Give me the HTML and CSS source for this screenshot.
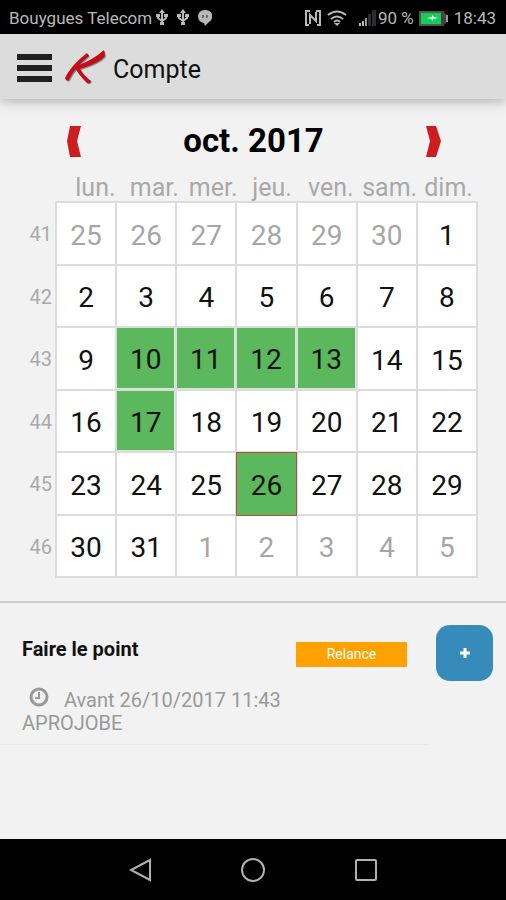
FILE: index.html
```html
<!DOCTYPE html>
<html lang="fr">
<head>
<meta charset="utf-8">
<meta name="viewport" content="width=device-width, initial-scale=1">
<title>Compte</title>
<link rel="stylesheet" href="styles.css">
</head>
<body>
<div class="status">
  <span>Bouygues Telecom</span>
  <svg class="usb" width="12" height="18" viewBox="0 0 12 18" fill="none" stroke="currentColor" stroke-width="2"><path d="M6 3v11M2 6v3l4 3 4-3V6"/><path d="M3 4l3-4 3 4zM4 13h4v3H4zM0 5h4v3H0zM8 5h4v3H8z" fill="currentColor" stroke="none"/></svg>
  <svg class="usb" width="12" height="18" viewBox="0 0 12 18" fill="none" stroke="currentColor" stroke-width="2"><path d="M6 3v11M2 6v3l4 3 4-3V6"/><path d="M3 4l3-4 3 4zM4 13h4v3H4zM0 5h4v3H0zM8 5h4v3H8z" fill="currentColor" stroke="none"/></svg>
  <svg class="chat" width="14" height="16" viewBox="0 0 14 16"><path d="M7 0c9 0 9 9 4 12l-4 4-1-3C-2 12-2 0 7 0z" fill="currentColor"/><path d="M4 5h2v2L5 8H4zM8 5h2v2L9 8H8z" fill="#666"/></svg>
  <span class="grow"></span>
  <svg width="16" height="16" viewBox="0 0 16 16" fill="none" stroke="currentColor" stroke-width="2"><path d="M5 1H1v14h3M11 1h4v14h-3"/><path d="M5 14V5l6 6V2"/></svg>
  <svg class="wifi" width="20" height="17" viewBox="0 0 20 17" fill="none" stroke="currentColor" stroke-width="2"><path d="M1 5q9-7 18 0M4 9q6-5 12 0M7 12q3-3 6 0"/><path d="M7 13h6l-3 3z" fill="currentColor" stroke="none"/></svg>
  <svg class="signal" width="18" height="16" viewBox="0 0 18 16"><path d="M1 13h2v3H1zM4 11h2v5H4z" fill="#bbb"/><path d="M7 8h2v8H7z" fill="#999"/><path d="M10 4h3v12h-3zM14 0h4v16h-4z" fill="#2d2d2d"/></svg>
  <span>90 %</span>
  <svg class="battery" width="30" height="15" viewBox="0 0 30 15"><path d="M1 1h23v13H1z" fill="#13cf55" stroke="#555" stroke-width="2"/><path d="M22 0h2l4 4v7l-4 4h-2z" fill="#444"/><path d="M28 4v7" stroke="#999" stroke-width="2"/><path d="M8 7l5-1V4l2 2 4 1-5 1v2l-2-2z" fill="#e8ffe8"/></svg>
  <span>18:43</span>
</div>

<header class="bar">
  <button class="menu" type="button" aria-label="Menu"><span></span><span></span><span></span></button>
  <svg class="logo" width="42" height="36" viewBox="0 0 42 36" aria-hidden="true">
    <path transform="translate(1 1)" fill="#8290a0" d="M22 3C14 9 5 18 0 28q1 4 4 2C8 22 15 13 24 6zM39 0C31 7 22 12 12 16l-2 2c3 5 8 11 12 15q3 1 4-2c-5-4-8-7-11-12C25 16 37 11 40 6z"/>
    <path fill="#c30d12" d="M22 3C14 9 5 18 0 28q1 4 4 2C8 22 15 13 24 6zM39 0C31 7 22 12 12 16l-2 2c3 5 8 11 12 15q3 1 4-2c-5-4-8-7-11-12C25 16 37 11 40 6z"/>
  </svg>
  <h1>Compte</h1>
</header>

<main>
  <section class="calendar">
    <div class="month">
      <button type="button" aria-label="Mois précédent"><svg width="15" height="31" viewBox="0 0 15 31"><path d="M4 0h11l-4 15 4 16H4L1 15z" fill="#ce1c1f"/></svg></button>
      <h2>oct. 2017</h2>
      <button type="button" aria-label="Mois suivant"><svg width="15" height="31" viewBox="0 0 15 31"><path d="M0 0h10l5 15-5 16H0l4-16z" fill="#ce1c1f"/></svg></button>
    </div>
    <table>
      <thead><tr><th>lun.</th><th>mar.</th><th>mer.</th><th>jeu.</th><th>ven.</th><th>sam.</th><th>dim.</th></tr></thead>
      <tbody>
        <tr><th>41</th><td class="out"><button>25</button></td><td class="out"><button>26</button></td><td class="out"><button>27</button></td><td class="out"><button>28</button></td><td class="out"><button>29</button></td><td class="out"><button>30</button></td><td><button>1</button></td></tr>
        <tr><th>42</th><td><button>2</button></td><td><button>3</button></td><td><button>4</button></td><td><button>5</button></td><td><button>6</button></td><td><button>7</button></td><td><button>8</button></td></tr>
        <tr><th>43</th><td><button>9</button></td><td class="busy"><button>10</button></td><td class="busy"><button>11</button></td><td class="busy"><button>12</button></td><td class="busy"><button>13</button></td><td><button>14</button></td><td><button>15</button></td></tr>
        <tr><th>44</th><td><button>16</button></td><td class="busy"><button>17</button></td><td><button>18</button></td><td><button>19</button></td><td><button>20</button></td><td><button>21</button></td><td><button>22</button></td></tr>
        <tr><th>45</th><td><button>23</button></td><td><button>24</button></td><td><button>25</button></td><td class="busy today"><button>26</button></td><td><button>27</button></td><td><button>28</button></td><td><button>29</button></td></tr>
        <tr><th>46</th><td><button>30</button></td><td><button>31</button></td><td class="out"><button>1</button></td><td class="out"><button>2</button></td><td class="out"><button>3</button></td><td class="out"><button>4</button></td><td class="out"><button>5</button></td></tr>
      </tbody>
    </table>
  </section>

  <section class="events">
    <article class="event">
      <div class="head"><h3>Faire le point</h3><span class="tag">Relance</span></div>
      <p><svg width="20" height="20" viewBox="0 0 20 20" fill="none" stroke="currentColor"><circle cx="10" cy="10" r="8" stroke-width="3"/><path d="M10 5v6H6" stroke-width="2"/></svg>Avant 26/10/2017 11:43<br>APROJOBE</p>
    </article>
    <button class="add" type="button" aria-label="Ajouter"><svg width="12" height="12" viewBox="0 0 12 12"><path d="M6 1v10M1 6h10" stroke="#fff" stroke-width="3"/></svg></button>
  </section>
</main>

<nav class="system">
  <button type="button" aria-label="Retour"><svg width="24" height="26" viewBox="0 0 24 26"><path d="M22 3v20L3 13z"/></svg></button>
  <button type="button" aria-label="Accueil"><svg width="26" height="26" viewBox="0 0 26 26"><circle cx="13" cy="13" r="11"/></svg></button>
  <button type="button" aria-label="Applications"><svg width="24" height="26" viewBox="0 0 24 26"><rect x="2" y="3" width="20" height="20" rx="1"/></svg></button>
</nav>
</body>
</html>
```
FILE: styles.css
```css
* { box-sizing: border-box; }

body {
  margin: 0;
  min-height: 100vh;
  display: flex;
  flex-direction: column;
  background: #f2f2f2;
  color: #111;
  font-family: Roboto, "Liberation Sans", sans-serif;
}

button {
  margin: 0;
  padding: 0;
  border: 0;
  background: none;
  color: inherit;
  font: inherit;
}

svg { display: block; flex: none; }
h1, h2, h3, p { margin: 0; }

.status {
  position: relative;
  display: flex;
  align-items: center;
  height: 34px;
  padding: 2px 10px 0 9px;
  background: #000;
  color: #b8b8b8;
  font-size: 17px;
  white-space: nowrap;
  z-index: 1;
}
.usb { margin-left: 4px; margin-right: 5px; }
.chat { margin-left: 4px; }
.grow { flex: 1; }
.wifi { margin-left: 6px; }
.signal { margin-left: 11px; margin-right: 2px; }
.battery { margin: 0 5px; }

.bar {
  display: flex;
  align-items: center;
  height: 65px;
  padding: 3px 17px 0;
  background: #dcdcdc;
  box-shadow: 0 2px 12px #aaa;
}
.menu {
  display: flex;
  flex-direction: column;
  gap: 5px;
  width: 35px;
  margin-right: 13px;
}
.menu span { height: 6px; background: #202020; }
.logo { margin-right: 6px; }
.bar h1 { padding-top: 2px; font-size: 25px; font-weight: 400; }

main { flex: 1; }

.calendar {
  padding: 20px 28px 23px;
  border-bottom: 2px solid #cfcfcf;
}
.month {
  display: flex;
  align-items: center;
  justify-content: space-between;
  height: 44px;
  padding: 0 37px 0 38px;
}
.month h2 { font-size: 33px; line-height: 44px; font-weight: 700; color: #000; }

table, thead { display: block; }
thead tr {
  display: grid;
  grid-template-columns: repeat(7, 1fr);
  padding: 11px 0 0 38px;
}
thead th {
  padding: 0;
  color: #a9a9a9;
  font-size: 25px;
  line-height: 28px;
  font-weight: 400;
}
tbody {
  display: grid;
  grid-template-columns: 29px repeat(7, 1fr);
  grid-auto-rows: 1fr;
  height: 375px;
  margin-top: 1px;
}
tbody tr { display: contents; }
tbody th {
  padding: 0 5px 0 0;
  align-self: center;
  color: #aaa;
  font-size: 20px;
  font-weight: 400;
  text-align: right;
}
td {
  display: flex;
  margin: -2px 0 0 -2px;
  padding: 0;
  border: 2px solid #dcdcdc;
  background: #fff;
}
td button {
  flex: 1;
  padding-top: 4px;
  color: #111;
  font-size: 28px;
}
.out button { color: #a6a6a6; }
.busy { background: #d8e8d6; }
.busy button { background: #5cb85c; margin: 0 1px 1px 0; }
.today {
  z-index: 1;
  margin: -1px 1px 0 -1px;
  border: 0;
  background: none;
}
.today button { margin: 0; border: 1px solid #c5483a; }

.events {
  display: flex;
  align-items: flex-start;
  justify-content: space-between;
  padding: 22px 13px 0 0;
}
.event {
  flex: 1;
  max-width: 429px;
  padding: 10px 22px 9px;
  border-bottom: 1px solid #ebebeb;
}
.head { display: flex; align-items: flex-start; justify-content: space-between; height: 28px; }
.head h3 { font-size: 20px; line-height: 28px; }
.tag {
  width: 111px;
  margin-top: 7px;
  background: #ffa200;
  color: #fff;
  font-size: 14px;
  line-height: 25px;
  text-align: center;
}
.event p {
  margin-top: 24px;
  color: #999;
  font-size: 20px;
  line-height: 23px;
}
.event p svg { display: inline-block; margin: 0 15px 0 7px; }
.add {
  display: grid;
  place-items: center;
  width: 57px;
  height: 56px;
  border-radius: 14px;
  background: #368bbb;
}

.system {
  display: flex;
  align-items: center;
  justify-content: center;
  gap: 88px;
  height: 61px;
  background: #000;
}
.system svg { fill: none; stroke: #b0b0b0; stroke-width: 2; }
```
